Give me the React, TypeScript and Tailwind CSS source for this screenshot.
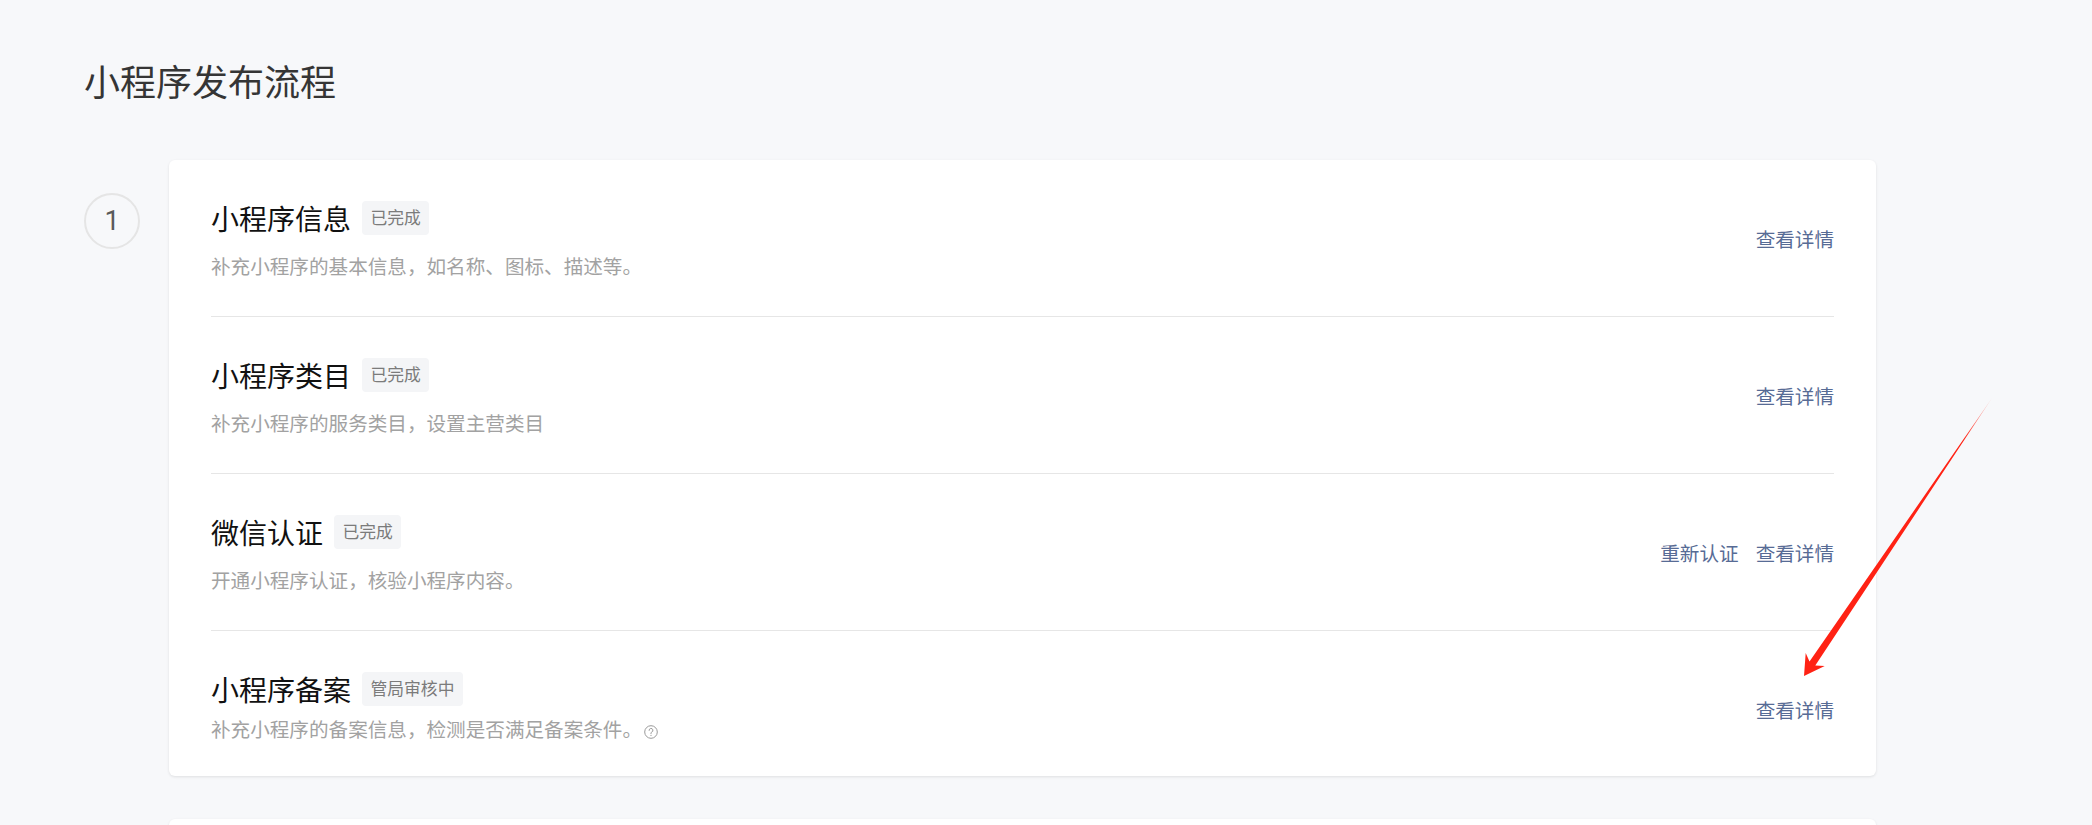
import React from 'react';

interface Item {
  title: string;
  status: string;
  desc: string;
  actions: string[];
  help?: boolean;
}

const STEP_ONE: Item[] = [
  { title: '小程序信息', status: '已完成', desc: '补充小程序的基本信息，如名称、图标、描述等。', actions: ['查看详情'] },
  { title: '小程序类目', status: '已完成', desc: '补充小程序的服务类目，设置主营类目', actions: ['查看详情'] },
  { title: '微信认证', status: '已完成', desc: '开通小程序认证，核验小程序内容。', actions: ['重新认证', '查看详情'] },
  { title: '小程序备案', status: '管局审核中', desc: '补充小程序的备案信息，检测是否满足备案条件。', actions: ['查看详情'], help: true },
];

function HelpIcon() {
  return (
    <svg width="14" height="14" viewBox="0 0 14 14" className="ml-[2px] inline-block align-[-2px]">
      <circle cx="7" cy="7" r="6.3" fill="none" stroke="#9a9a9a" strokeWidth="1" />
      <path d="M5.1 5.4a1.9 1.9 0 1 1 2.6 1.7c-.5.2-.7.5-.7 1v.5" fill="none" stroke="#9a9a9a" strokeWidth="1" strokeLinecap="round" />
      <circle cx="7" cy="10.3" r="0.65" fill="#9a9a9a" />
    </svg>
  );
}

function Row({ item, last }: { item: Item; last: boolean }) {
  return (
    <div
      className={
        last
          ? 'flex items-start justify-between pt-[38px] pb-[33px]'
          : 'flex items-start justify-between border-b border-[#e6e6e6] pt-[38px] pb-[36px]'
      }
    >
      <div>
        <div className="flex h-[40px] items-center">
          <span className="text-[28px] leading-[40px] text-[#111]">{item.title}</span>
          <span className="ml-[11px] rounded-[4px] bg-[#f4f5f7] px-[8.5px] text-[16.8px] leading-[33.6px] text-[#7b7b7b]">
            {item.status}
          </span>
        </div>
        <p className={(last ? 'mt-[6px]' : 'mt-[14px]') + ' text-[19.6px] leading-[28px] text-[#a2a2a2]'}>
          {item.desc}
          {item.help && <HelpIcon />}
        </p>
      </div>
      <div className="mt-[27px] flex gap-[17px]">
        {item.actions.map((a) => (
          <a key={a} className="cursor-pointer text-[19.6px] leading-[28px] text-[#576b95]">
            {a}
          </a>
        ))}
      </div>
    </div>
  );
}

export default function App() {
  return (
    <div className="relative h-[825px] w-full overflow-hidden bg-[#f7f8fa] font-['Noto_Sans_CJK_SC',sans-serif]">
      <div className="pl-[84px] pt-[55px]">
        <h1 className="text-[36px] leading-[50px] text-[#353535]">小程序发布流程</h1>
        <div className="mt-[55px] flex flex-col gap-[43px]">
          {/* step 1 */}
          <div className="flex items-start gap-[29px]">
            <div className="mt-[33px] flex h-[56px] w-[56px] shrink-0 items-center justify-center rounded-full border-2 border-[#e5e5e5] font-['Roboto',sans-serif] text-[27px] text-[#5a5a5a]">
              1
            </div>
            <div className="w-[1707px] rounded-[6px] bg-white px-[42px] shadow-[0_1px_3px_rgba(0,0,0,0.1)]">
              {STEP_ONE.map((item, i) => (
                <Row key={item.title} item={item} last={i === STEP_ONE.length - 1} />
              ))}
            </div>
          </div>
          {/* step 2, only its top edge is in view */}
          <div className="flex items-start gap-[29px]">
            <div className="w-[56px] shrink-0" />
            <div className="h-[200px] w-[1707px] rounded-[6px] bg-white shadow-[0_1px_3px_rgba(0,0,0,0.1)]" />
          </div>
        </div>
      </div>

      {/* red annotation arrow */}
      <svg className="pointer-events-none absolute left-0 top-0" width="2092" height="825" viewBox="0 0 2092 825">
        <defs>
          <linearGradient id="arrowFade" x1="1992" y1="398" x2="1804" y2="676" gradientUnits="userSpaceOnUse">
            <stop offset="0" stopColor="#ff2a1a" stopOpacity="0.2" />
            <stop offset="0.15" stopColor="#ff2214" stopOpacity="1" />
            <stop offset="1" stopColor="#ff2214" stopOpacity="1" />
          </linearGradient>
        </defs>
        <polygon
          points="1992,398 1815.3,665.6 1824.7,665.9 1804,676 1805.7,653 1809.5,661.6"
          fill="url(#arrowFade)"
        />
      </svg>
    </div>
  );
}
